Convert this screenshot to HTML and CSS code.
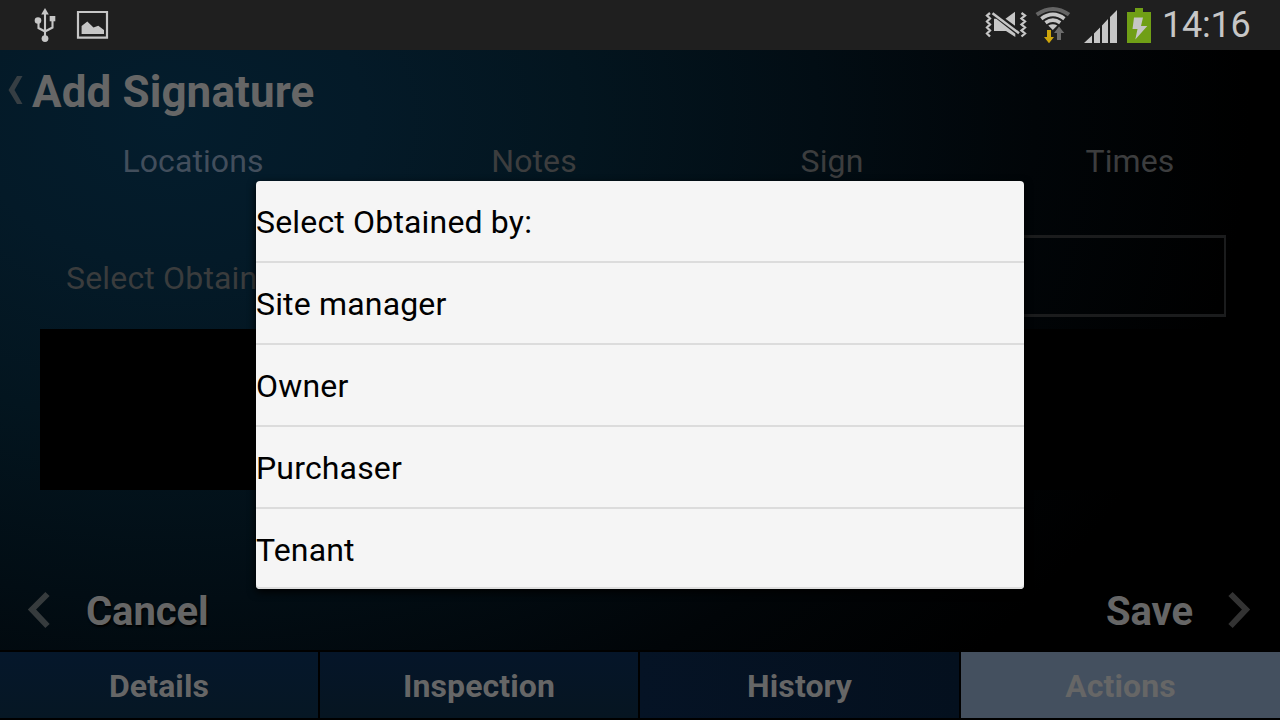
FILE: index.html
```html
<!DOCTYPE html>
<html lang="en">
<head>
<meta charset="utf-8">
<title>Add Signature</title>
<link rel="stylesheet" href="styles.css">
</head>
<body>
<div class="screen">
  <header class="status">
    <svg class="status-left" width="130" height="50" viewBox="0 0 130 50">
      <g fill="#c6c6c6">
        <path d="M45 8l3.800 6.500h-7.600z"/>
        <circle cx="38" cy="20.500" r="3.300"/>
        <path d="M49.700 16h5.600v5.300h-5.600z"/>
        <circle cx="45" cy="38.600" r="3.400"/>
        <path d="M81.600 34V26l5.700-4.500 6.200 6 4.800-1.700 5.700 4.200v4z"/>
      </g>
      <path d="M45 12v26M38.500 22v6l6.500 3.500 7.500-4V20" fill="none" stroke="#c6c6c6" stroke-width="2.100"/>
      <path d="M78 12h29v25.600H78z" fill="none" stroke="#c6c6c6" stroke-width="2.200"/>
    </svg>
    <div class="status-right">
      <svg width="190" height="50" viewBox="970 0 190 50">
        <path d="M990 13l-3 2.500 3 3-3 3 3 3-3 3 3 3-3 3 3 3M1021.500 13l3.500 2.500-3.500 3 3.500 3-3.500 3 3.500 3-3.500 3 3.500 3-3.500 3" fill="none" stroke="#c6c6c6" stroke-width="2.300"/>
        <path d="M994 18.800h2.300l19 15v3.200l-9.300-6H994zM1005.500 18.800l9.500-7v14z" fill="#c6c6c6"/>
        <path d="M992.500 13.200l26.500 20" stroke="#c6c6c6" stroke-width="2.500"/>
        <g fill="none">
          <path d="M1036.700 14.700Q1053 3.200 1069 14.700" stroke="#656565" stroke-width="4"/>
          <path d="M1041.300 18.700Q1053 10.200 1064.400 18.700M1045.500 22.700Q1053 17.600 1060.200 22.700" stroke="#c6c6c6" stroke-width="3.700"/>
        </g>
        <path d="M1048.300 25.500q4.700-2.500 9 0l-4.500 4.500z" fill="#c6c6c6"/>
        <path d="M1047 30h4v7h3l-5 6.200-5-6.200h3z" fill="#cda50c"/>
        <path d="M1057 40v-7h-3l5-6.500 5.300 6.500h-3.300v7z" fill="#6c6c6c"/>
        <path d="M1084 43l8-7.500V43zM1094 43v-9.500l6-6V43zM1102 43V25.500l6-6.500v24zM1110 43V17l7-7v33z" fill="#c6c6c6"/>
        <path d="M1127 12h8V8h8v4h8v31h-24z" fill="#709f16"/>
        <path d="M1134 17.500h9l-2 8.500h6.300l-12 13.500 2.200-10.500h-5z" fill="#c6c6c6"/>
      </svg>
      <span class="clock">14:16</span>
    </div>
  </header>
  <main class="content">
    <div class="title">
      <svg class="back" width="32" height="40" viewBox="0 0 32 40"><path d="M17 6h5.500L14.500 20l8 14H17L8.500 20z" fill="#363e43"/></svg>
      <h1>Add Signature</h1>
    </div>
    <nav class="tabs">
      <span class="tab tab-on">Locations</span>
      <span class="tab">Notes</span>
      <span class="tab">Sign</span>
      <span class="tab">Times</span>
    </nav>
    <div class="field">
      <span class="label">Select Obtain</span>
      <div class="select"></div>
    </div>
    <div class="pad"></div>
    <div class="actions">
      <div class="action">
        <svg width="86" height="50" viewBox="0 0 86 50"><path d="M47.500 9L32 24.500 47.500 41" fill="none" stroke="#363b3d" stroke-width="6"/></svg>
        <span>Cancel</span>
      </div>
      <div class="action">
        <span>Save</span>
        <svg width="87" height="50" viewBox="0 0 87 50"><path d="M37.500 9L53 24.500 37.500 41" fill="none" stroke="#333" stroke-width="6"/></svg>
      </div>
    </div>
  </main>
  <footer class="bottom">
    <div class="cell cell-1">Details</div>
    <div class="cell cell-2">Inspection</div>
    <div class="cell cell-3">History</div>
    <div class="cell cell-on">Actions</div>
  </footer>
  <ul class="dialog">
    <li>Select Obtained by:</li>
    <li>Site manager</li>
    <li>Owner</li>
    <li>Purchaser</li>
    <li>Tenant</li>
  </ul>
</div>
</body>
</html>
```
FILE: styles.css
```css
* { box-sizing: border-box; }
body { margin: 0; background: #000; font-family: Roboto, sans-serif; }
.screen {
  position: relative;
  width: 1280px;
  height: 720px;
  overflow: hidden;
  display: flex;
  flex-direction: column;
  white-space: nowrap;
}
.status {
  height: 50px;
  background: #1f1f1f;
  display: flex;
  justify-content: space-between;
}
.status-right { display: flex; width: 310px; }
.clock { color: #c6c6c6; font-size: 36px; line-height: 50px; margin-left: 2px; letter-spacing: -0.2px; }
.content {
  height: 600px;
  display: flex;
  flex-direction: column;
  background: radial-gradient(ellipse 1080px 800px at 170px 70px, #041d2d 0%, #041a28 18%, #03151f 38%, #020d14 60%, #010508 80%, #000 100%);
}
.title { display: flex; height: 84px; }
.back { margin-top: 20px; }
h1 { margin: 0; font-size: 44px; line-height: 84px; font-weight: 700; color: #666; letter-spacing: 0.1px; }
.tabs {
  height: 54px;
  display: grid;
  grid-template-columns: 386px 296px 300px 296px;
  text-align: center;
  font-size: 32px;
  line-height: 54px;
  letter-spacing: 0.1px;
  color: #3c3d3e;
}
.tab-on { color: #424e5c; }
.field { display: flex; height: 141px; padding: 47px 54px 0 66px; }
.label { width: 314px; font-size: 32px; line-height: 86px; letter-spacing: 0.17px; color: #3a3c3d; }
.select { flex: 1; height: 82px; border: 2px solid #1b1c1d; border-width: 3px 2px; }
.pad { height: 161px; margin: 0 40px; background: #000; }
.actions { display: flex; justify-content: space-between; padding-top: 95px; }
.action {
  display: flex;
  height: 50px;
  font-size: 40px;
  line-height: 54px;
  font-weight: 700;
  letter-spacing: -0.1px;
  color: #666;
  text-shadow: 1px 2px 2px #000;
}
.bottom {
  height: 70px;
  padding: 2px 0;
  background: #000;
  display: grid;
  grid-template-columns: 318px 318px 319px 319px;
  grid-template-rows: 66px;
  gap: 2px;
  text-align: center;
  font-size: 32px;
  line-height: 68px;
  font-weight: 700;
  color: #666;
}
.cell { height: 66px; letter-spacing: 0.1px; }
.cell-1 { background: linear-gradient(#05172b, #061724); }
.cell-2 { background: linear-gradient(#051529, #061521); }
.cell-3 { background: linear-gradient(90deg, #051325, #04101e); }
.cell-on { background: #44505f; }
.dialog {
  position: absolute;
  left: 256px;
  top: 181px;
  width: 768px;
  height: 408px;
  margin: 0;
  padding: 0;
  list-style: none;
  background: #f5f5f5;
  border-radius: 4px;
  box-shadow: 0 3px 9px #000, inset 0 -2px 0 #dedede;
  font-size: 32px;
  line-height: 82px;
  letter-spacing: 0.17px;
  color: #000;
}
.dialog li { height: 82px; border-bottom: 2px solid #dcdcdc; }
.dialog li:last-child { border-bottom: 0; }
```
